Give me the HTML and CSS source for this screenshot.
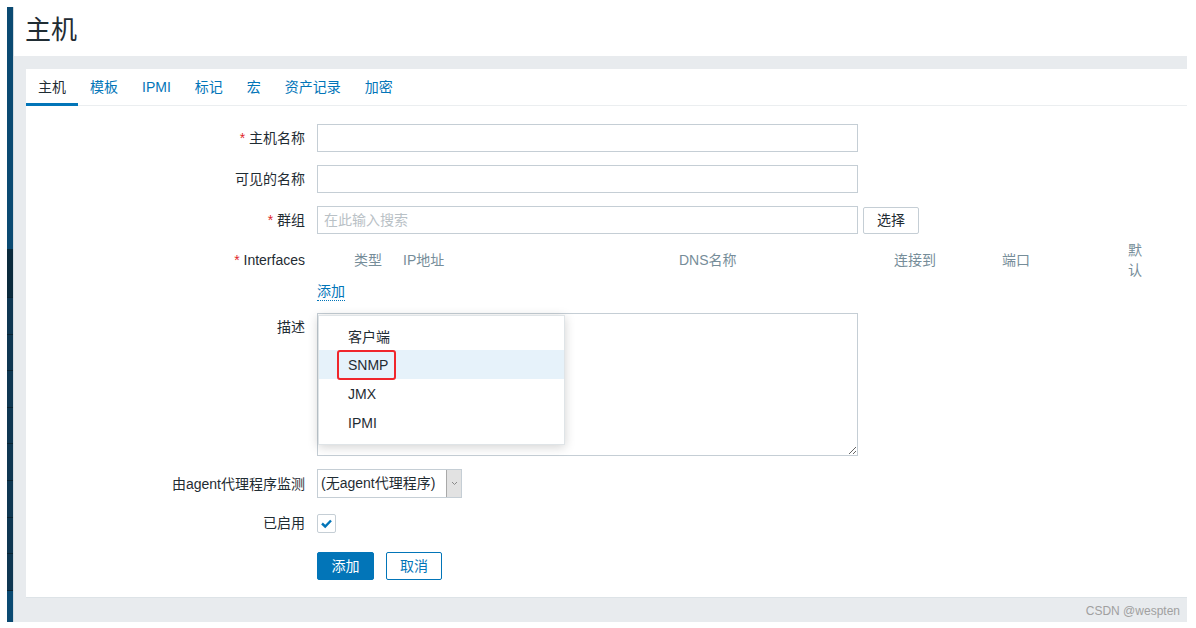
FILE: index.html
```html
<!DOCTYPE html>
<html lang="zh-CN">
<head>
<meta charset="utf-8">
<title>主机</title>
<link rel="stylesheet" href="styles.css">
</head>
<body>
<div class="frame">
  <div class="sidebar">
    <div class="seg-top"></div>
    <div class="seg-dark"></div>
    <div class="seg"></div>
    <div class="seg"></div>
    <div class="seg"></div>
    <div class="seg"></div>
    <div class="seg"></div>
    <div class="seg"></div>
    <div class="seg"></div>
    <div class="seg"></div>
    <div class="seg-bottom"></div>
  </div>
  <div class="main">
    <header class="header"><h1>主机</h1></header>
    <div class="content">
      <div class="card">
        <nav class="tabs">
          <span class="tab active">主机</span>
          <span class="tab">模板</span>
          <span class="tab">IPMI</span>
          <span class="tab">标记</span>
          <span class="tab">宏</span>
          <span class="tab">资产记录</span>
          <span class="tab">加密</span>
        </nav>
        <form class="form">
          <div class="row r1">
            <label class="label"><span class="req">*</span> 主机名称</label>
            <div class="input"></div>
          </div>
          <div class="row r2">
            <label class="label">可见的名称</label>
            <div class="input"></div>
          </div>
          <div class="row r3">
            <label class="label"><span class="req">*</span> 群组</label>
            <div class="input placeholder">在此输入搜索</div>
            <span class="btn-select">选择</span>
          </div>
          <div class="row r4">
            <label class="label"><span class="req">*</span> Interfaces</label>
            <div class="iface-head">
              <span></span>
              <span>类型</span>
              <span>IP地址</span>
              <span>DNS名称</span>
              <span>连接到</span>
              <span>端口</span>
              <span class="narrow">默认</span>
            </div>
          </div>
          <div class="row r5">
            <span class="label"></span>
            <span class="link">添加</span>
          </div>
          <div class="row r6">
            <label class="label top">描述</label>
            <div class="field-wrap">
              <textarea class="textarea"></textarea>
              <ul class="dropdown">
                <li class="item">客户端</li>
                <li class="item hover"><span class="mark">SNMP</span></li>
                <li class="item">JMX</li>
                <li class="item">IPMI</li>
              </ul>
            </div>
          </div>
          <div class="row r7">
            <label class="label">由agent代理程序监测</label>
            <div class="select">
              <span class="select-value">(无agent代理程序)</span>
              <span class="select-arrow"><svg width="7" height="5" viewBox="0 0 7 5"><polyline points="1,1 3.5,3.5 6,1" fill="none" stroke="#8a8a8a" stroke-width="1"/></svg></span>
            </div>
          </div>
          <div class="row r8">
            <label class="label">已启用</label>
            <span class="checkbox"><svg width="17" height="17" viewBox="0 0 17 17"><polyline points="4,8.5 7.2,11.5 13,5.5" fill="none" stroke="#0275b8" stroke-width="2.4"/></svg></span>
          </div>
          <div class="row r9">
            <span class="label"></span>
            <span class="btn primary">添加</span>
            <span class="btn secondary">取消</span>
          </div>
        </form>
      </div>
    </div>
    <div class="watermark">CSDN @wespten</div>
  </div>
</div>
</body>
</html>
```
FILE: styles.css
```css
html, body {
  margin: 0;
  padding: 0;
  background: #ffffff;
}
body {
  font-family: "Liberation Sans", "Noto Sans CJK SC", sans-serif;
  font-size: 14px;
  color: #1f2c33;
}
.frame {
  display: flex;
  margin: 7px 9px 0 7px;
  height: 615px;
}
.sidebar {
  width: 6px;
  display: flex;
  flex-direction: column;
  border-right: 1px solid #d3dbe0;
}
.seg-top {
  height: 242px;
  background: #0b4a72;
}
.seg-dark {
  height: 48px;
  background: #0a2a3c;
}
.seg {
  height: 35.6px;
  background: #0f3752;
  border-top: 1px solid #0a2332;
}
.seg-bottom {
  flex: 1;
  background: #0b4a72;
  border-top: 1px solid #0a2332;
}
.main {
  flex: 1;
  background: #e8ebee;
  display: flex;
  flex-direction: column;
  position: relative;
}
.header {
  background: #ffffff;
  height: 49px;
  padding-left: 11px;
  display: flex;
  align-items: center;
}
.header h1 {
  margin: 0 0 3px 0;
  font-size: 26px;
  font-weight: normal;
  line-height: 1;
  color: #1f2c33;
}
.content {
  flex: 1;
  display: flex;
  padding: 13px 0 24px 12px;
}
.card {
  flex: 1;
  background: #ffffff;
  border-bottom: 1px solid #dde3e7;
}
.tabs {
  display: flex;
  height: 36px;
  border-bottom: 1px solid #ebeef0;
}
.tab {
  padding: 0 12px;
  height: 37px;
  line-height: 36px;
  color: #0275b8;
  margin-bottom: -1px;
}
.tab.active {
  color: #1f2c33;
  box-shadow: inset 0 -3px 0 #0275b8;
}
.form {
  margin: 0;
  padding-top: 18px;
}
.row {
  display: flex;
  align-items: center;
  margin-bottom: 13px;
}
.label {
  flex: 0 0 279px;
  margin-right: 12px;
  text-align: right;
  line-height: 20px;
  color: #1f2c33;
}
.label.top {
  align-self: flex-start;
  line-height: 29px;
}
.req {
  color: #e0252b;
}
.input {
  width: 541px;
  height: 28px;
  box-sizing: border-box;
  border: 1px solid #c5ced5;
  background: #ffffff;
  padding-left: 6px;
  line-height: 26px;
}
.placeholder {
  color: #b9c1c6;
}
.btn-select {
  margin-left: 5px;
  width: 56px;
  height: 27px;
  box-sizing: border-box;
  border: 1px solid #c5ced5;
  border-radius: 2px;
  text-align: center;
  line-height: 25px;
  color: #1f2c33;
  background: #ffffff;
}
.r3 {
  margin-bottom: 6px;
}
.r4 {
  height: 40px;
  margin-bottom: 2px;
}
.iface-head {
  display: grid;
  grid-template-columns: 37px 49px 276px 215px 108px 126px 16px;
  align-items: center;
  color: #768d99;
  line-height: 20px;
}
.iface-head .narrow {
  width: 16px;
  word-break: break-all;
}
.r5 {
  margin-bottom: 12px;
}
.link {
  color: #0275b8;
  line-height: 18px;
  border-bottom: 1px dotted #0275b8;
}
.field-wrap {
  position: relative;
  width: 541px;
  height: 143px;
}
.textarea {
  display: block;
  width: 541px;
  height: 143px;
  box-sizing: border-box;
  margin: 0;
  border: 1px solid #c5ced5;
  background: #ffffff;
  font: inherit;
}
.r6 {
  align-items: flex-start;
  margin-bottom: 13px;
}
.dropdown {
  position: absolute;
  left: 1px;
  top: 2px;
  width: 247px;
  box-sizing: border-box;
  margin: 0;
  padding: 5px 0 7px 0;
  list-style: none;
  background: #ffffff;
  border: 1px solid #dfe4e7;
  box-shadow: 0 2px 10px rgba(0, 0, 0, 0.18);
}
.item {
  height: 29px;
  display: flex;
  align-items: center;
  padding-left: 29px;
  color: #1f2c33;
}
.item.hover {
  background: #e6f2fa;
}
.mark {
  box-sizing: border-box;
  height: 30px;
  line-height: 26px;
  margin-left: -11px;
  padding: 0 6px 0 9px;
  border: 2px solid #f0262b;
  border-radius: 3px;
}
.select {
  display: flex;
  width: 145px;
  height: 29px;
  box-sizing: border-box;
  border: 1px solid #c5ced5;
  background: #ffffff;
}
.select-value {
  flex: 1;
  padding-left: 3px;
  line-height: 27px;
  white-space: nowrap;
}
.select-arrow {
  width: 14px;
  background: #e2e2e2;
  border-left: 1px solid #a9a9a9;
  display: flex;
  align-items: center;
  justify-content: center;
}
.r7 {
  margin-bottom: 15px;
}
.checkbox {
  width: 19px;
  height: 19px;
  box-sizing: border-box;
  border: 1px solid #c5ced5;
  border-radius: 2px;
  display: flex;
  align-items: center;
  justify-content: center;
}
.r8 {
  margin-bottom: 19px;
}
.btn {
  height: 28px;
  box-sizing: border-box;
  border-radius: 2px;
  line-height: 26px;
  text-align: center;
}
.btn.primary {
  width: 57px;
  background: #0275b8;
  border: 1px solid #0275b8;
  color: #ffffff;
}
.btn.secondary {
  width: 56px;
  margin-left: 12px;
  border: 1px solid #0275b8;
  color: #0275b8;
  background: #ffffff;
}
.watermark {
  position: absolute;
  right: 7px;
  bottom: 4px;
  font-size: 12px;
  color: #a0a0a0;
}
```
